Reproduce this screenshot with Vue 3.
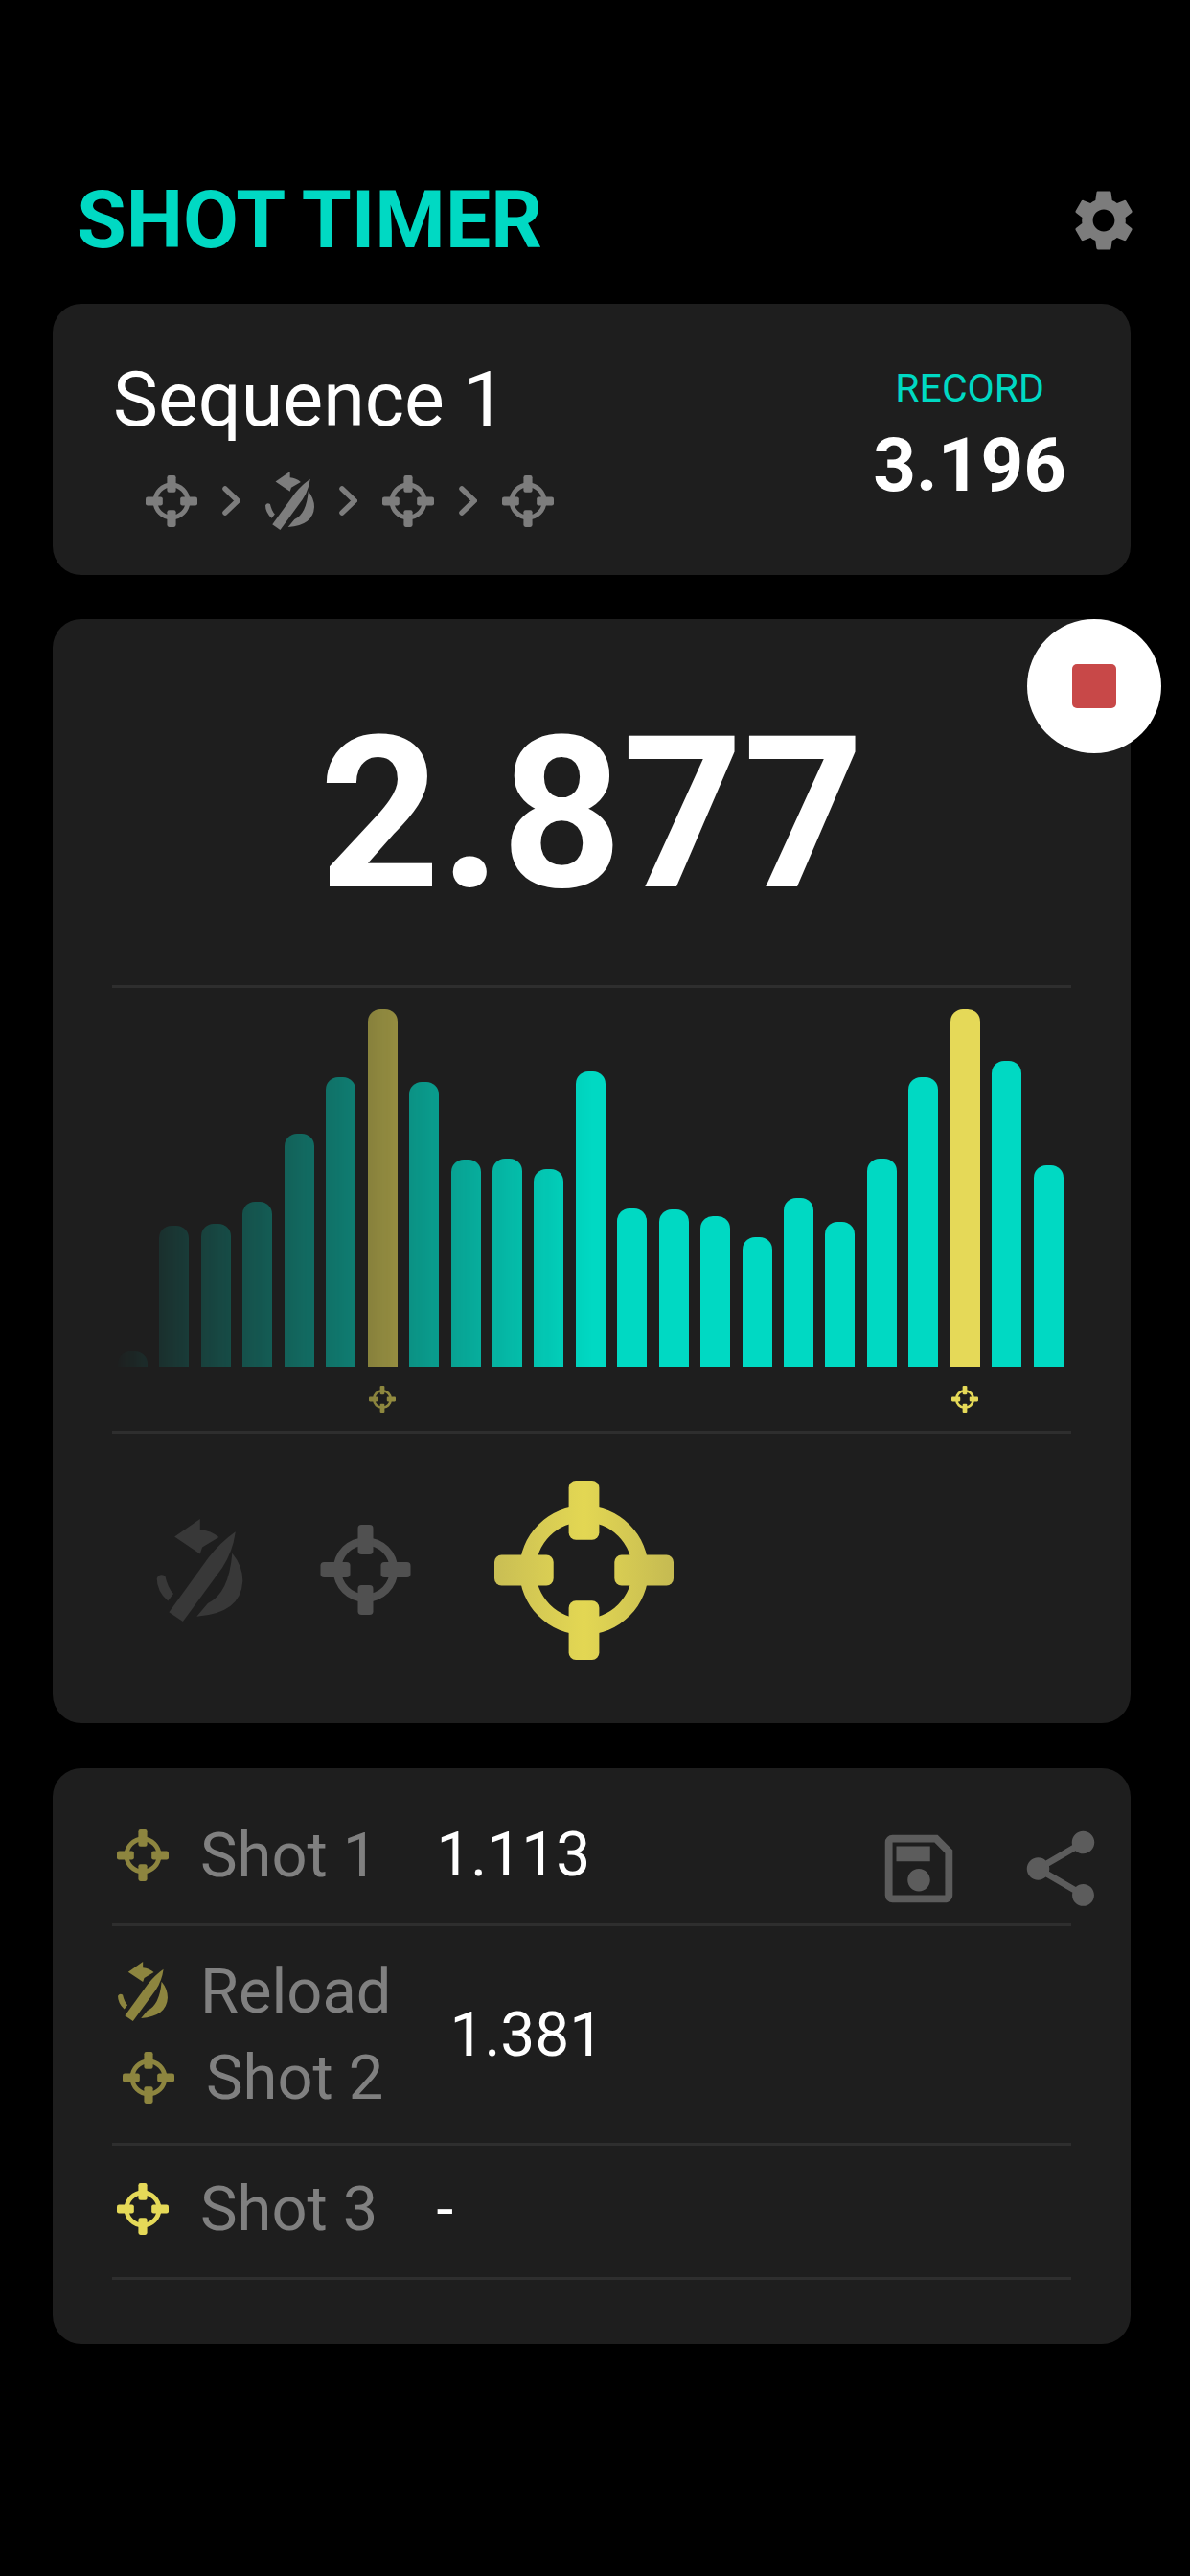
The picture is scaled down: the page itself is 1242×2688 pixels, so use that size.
<template>
  <div class="page">
    <!-- shared icon shapes -->
    <svg class="defs" aria-hidden="true">
      <defs>
        <linearGradient id="big-fill" gradientUnits="userSpaceOnUse" x1="0" y1="0" x2="100" y2="0">
          <stop offset="0" stop-color="#c9be54" />
          <stop offset="0.5" stop-color="#e3d753" />
          <stop offset="1" stop-color="#c5ba52" />
        </linearGradient>
      </defs>
      <symbol id="ic-target" viewBox="0 0 100 100">
        <path fill-rule="evenodd" d="M50 14a36 36 0 1 0 0 72a36 36 0 1 0 0-72zM50 23a27 27 0 1 1 0 54a27 27 0 1 1 0-54z" />
        <rect x="41.5" y="0" width="17" height="33" rx="4" />
        <rect x="41.5" y="67" width="17" height="33" rx="4" />
        <rect x="0" y="41.5" width="33" height="17" rx="4" />
        <rect x="67" y="41.5" width="33" height="17" rx="4" />
      </symbol>
      <symbol id="ic-reload" viewBox="0 0 155 185">
        <path d="M32 32L78 0L78 19Q98 21 112 33L82 51L78 63Z" />
        <path d="M142 23Q137 60 118 88L47 185L22 168L93 70Q115 42 142 23Z" />
        <path d="M136 62Q155 85 155 112Q152 170 72 176L92 152Q130 135 136 62Z" />
        <path d="M0 107Q5 97 15 103Q20 125 30 135L20 148Q0 130 0 107Z" />
      </symbol>
    </svg>

    <header class="header">
      <h1 class="title">SHOT TIMER</h1>
      <svg class="gear" viewBox="0 0 24 24">
        <path d="M19.14,12.94c0.04-0.3,0.06-0.61,0.06-0.94c0-0.32-0.02-0.64-0.07-0.94l2.03-1.58c0.18-0.14,0.23-0.41,0.12-0.61l-1.92-3.32c-0.12-0.22-0.37-0.29-0.59-0.22l-2.39,0.96c-0.5-0.38-1.03-0.7-1.62-0.94L14.4,2.81c-0.04-0.24-0.24-0.41-0.48-0.41h-3.84c-0.24,0-0.43,0.17-0.47,0.41L9.25,5.35C8.66,5.59,8.12,5.92,7.63,6.29L5.24,5.33c-0.22-0.08-0.47,0-0.59,0.22L2.74,8.87C2.62,9.08,2.66,9.34,2.86,9.48l2.03,1.58C4.84,11.36,4.8,11.69,4.8,12s0.02,0.64,0.07,0.94l-2.03,1.58c-0.18,0.14-0.23,0.41-0.12,0.61l1.92,3.32c0.12,0.22,0.37,0.29,0.59,0.22l2.39-0.96c0.5,0.38,1.03,0.7,1.62,0.94l0.36,2.54c0.05,0.24,0.24,0.41,0.48,0.41h3.84c0.24,0,0.44-0.17,0.47-0.41l0.36-2.54c0.59-0.24,1.13-0.56,1.62-0.94l2.39,0.96c0.22,0.08,0.47,0,0.59-0.22l1.92-3.32c0.12-0.22,0.07-0.47-0.12-0.61L19.14,12.94z M12,15.6c-1.98,0-3.6-1.62-3.6-3.6s1.62-3.6,3.6-3.6s3.6,1.62,3.6,3.6S13.98,15.6,12,15.6z" />
      </svg>
    </header>

    <section class="card seq-card">
      <div class="seq-left">
        <div class="seq-name">Sequence 1</div>
        <div class="seq-steps">
          <template v-for="(step, i) in steps" :key="i">
            <svg v-if="i > 0" class="chev" viewBox="0 0 19 31">
              <polyline points="3,3 16,15.5 3,28" />
            </svg>
            <svg :class="step === 'reload' ? 'ic-reload' : 'ic-target'"><use :href="'#ic-' + step" /></svg>
          </template>
        </div>
      </div>
      <div class="seq-right">
        <div class="record-label">RECORD</div>
        <div class="record-value">3.196</div>
      </div>
    </section>

    <section class="card timer-card">
      <button class="stop"><span class="stop-square"></span></button>
      <div class="timer">2.877</div>
      <div class="divider"></div>
      <div class="chart">
        <div class="bars">
          <div
            v-for="(bar, i) in bars"
            :key="i"
            class="bar"
            :class="{ shot: bar.shot }"
            :style="{ height: bar.h + 'px' }"
          ></div>
        </div>
        <div class="marks">
          <div v-for="(bar, i) in bars" :key="i" class="mark">
            <svg v-if="bar.shot" class="mark-ic"><use href="#ic-target" /></svg>
          </div>
        </div>
      </div>
      <div class="divider"></div>
      <div class="queue">
        <svg class="q-reload"><use href="#ic-reload" /></svg>
        <svg class="q-target"><use href="#ic-target" /></svg>
        <svg class="q-active"><use href="#ic-target" /></svg>
      </div>
    </section>

    <section class="card list-card">
      <div class="row row-first">
        <svg class="row-ic target dim"><use href="#ic-target" /></svg>
        <span class="label">Shot 1</span>
        <span class="value">1.113</span>
        <div class="actions">
          <svg class="action" viewBox="0 0 24 24">
            <path d="M17 3H5a2 2 0 0 0-2 2v14a2 2 0 0 0 2 2h14c1.1 0 2-.9 2-2V7l-4-4zm2 16H5V5h11.17L19 7.83V19zm-7-7c-1.66 0-3 1.34-3 3s1.34 3 3 3 3-1.34 3-3-1.34-3-3-3zM6 6h9v4H6z" />
          </svg>
          <svg class="action" viewBox="0 0 24 24">
            <path d="M18 16.08c-.76 0-1.44.3-1.96.77L8.91 12.7c.05-.23.09-.46.09-.7s-.04-.47-.09-.7l7.05-4.11c.54.5 1.25.81 2.04.81 1.66 0 3-1.34 3-3s-1.34-3-3-3-3 1.34-3 3c0 .24.04.47.09.7L8.04 9.81C7.5 9.31 6.79 9 6 9c-1.66 0-3 1.34-3 3s1.34 3 3 3c.79 0 1.5-.31 2.04-.81l7.12 4.16c-.05.21-.08.43-.08.65 0 1.61 1.31 2.92 2.92 2.92s2.92-1.31 2.92-2.92-1.31-2.92-2.92-2.92z" />
          </svg>
        </div>
      </div>
      <div class="row row-double">
        <div class="lines">
          <div class="line">
            <svg class="row-ic reload dim"><use href="#ic-reload" /></svg>
            <span class="label">Reload</span>
          </div>
          <div class="line indented">
            <svg class="row-ic target dim"><use href="#ic-target" /></svg>
            <span class="label">Shot 2</span>
          </div>
        </div>
        <span class="value">1.381</span>
      </div>
      <div class="row row-last">
        <svg class="row-ic target bright"><use href="#ic-target" /></svg>
        <span class="label">Shot 3</span>
        <span class="value">-</span>
      </div>
    </section>
  </div>
</template>

<script setup>
const steps = ['target', 'reload', 'target', 'target']

// bar heights in px, shots are the yellow ones
const heights = [16, 147, 149, 172, 243, 302, 373, 297, 216, 217, 206, 308, 165, 164, 157, 135, 176, 151, 217, 302, 373, 319, 210]
const bars = heights.map((h, i) => ({ h, shot: i === 6 || i === 20 }))
</script>

<style>
html,
body {
  background: #000;
}
</style>

<style scoped>
.page {
  min-height: 2688px;
  box-sizing: border-box;
  padding: 190px 62px 0 55px;
  background: #000;
  font-family: Roboto, sans-serif;
}

.defs {
  position: absolute;
  width: 0;
  height: 0;
}

/* header */
.header {
  display: flex;
  align-items: center;
  justify-content: space-between;
  height: 80px;
  margin-bottom: 47px;
  padding-left: 25px;
}

.title {
  margin: 0;
  font-size: 84px;
  font-weight: 700;
  line-height: 80px;
  color: #00d9c3;
}

.gear {
  width: 76px;
  height: 76px;
  margin-right: -10px;
  fill: #7c7c7c;
}

.card {
  position: relative;
  box-sizing: border-box;
  background: #1e1e1e;
  border-radius: 30px;
}

/* sequence card */
.seq-card {
  display: flex;
  justify-content: space-between;
  height: 283px;
  padding: 60px 67px 0 63px;
  margin-bottom: 46px;
}

.seq-name {
  font-size: 79px;
  line-height: 80px;
  color: #fff;
}

.seq-steps {
  display: flex;
  align-items: center;
  gap: 26px;
  height: 61px;
  margin-top: 35px;
  padding-left: 34px;
  color: #7d7d7d;
}

.seq-steps svg {
  fill: currentColor;
}

.ic-target {
  width: 54px;
  height: 54px;
}

.ic-reload {
  width: 51px;
  height: 61px;
}

.chev {
  width: 19px;
  height: 31px;
}

.chev polyline {
  fill: none;
  stroke: #7d7d7d;
  stroke-width: 5.5;
  stroke-linecap: round;
}

.seq-right {
  text-align: center;
}

.record-label {
  font-size: 41px;
  line-height: 50px;
  color: #00d9c3;
  margin-top: 3px;
}

.record-value {
  font-size: 78px;
  font-weight: 700;
  line-height: 90px;
  color: #fff;
  margin-top: 11px;
}

/* timer card */
.timer-card {
  height: 1152px;
  padding: 0 62px;
  margin-bottom: 47px;
}

.stop {
  position: absolute;
  top: 0;
  right: -32px;
  display: flex;
  align-items: center;
  justify-content: center;
  width: 140px;
  height: 140px;
  padding: 0;
  border: 0;
  border-radius: 50%;
  background: #fff;
}

.stop-square {
  width: 46px;
  height: 46px;
  border-radius: 5px;
  background: #c84848;
}

.timer {
  height: 382px;
  padding-top: 84px;
  box-sizing: border-box;
  font-size: 220px;
  font-weight: 700;
  line-height: 240px;
  text-align: center;
  color: #fff;
}

.divider {
  height: 3px;
  background: #2e2e2e;
}

.chart {
  -webkit-mask-image: linear-gradient(90deg, transparent, #000 50%);
  mask-image: linear-gradient(90deg, transparent, #000 50%);
}

.bars,
.marks {
  display: flex;
  gap: 12.44px;
  padding-left: 6px;
}

.bars {
  align-items: flex-end;
  height: 373px;
  padding-top: 22px;
}

.bar {
  flex: none;
  width: 31px;
  border-radius: 13px 13px 0 0;
  background: #00d9c3;
}

.bar.shot {
  background: #e5d958;
}

.marks {
  align-items: center;
  height: 67px;
}

.mark {
  display: flex;
  justify-content: center;
  flex: none;
  width: 31px;
}

.mark-ic {
  width: 28px;
  height: 28px;
  fill: #e5d958;
}

.queue {
  display: flex;
  align-items: center;
  gap: 80px;
  height: 284px;
  padding-left: 46px;
}

.q-reload {
  width: 91px;
  height: 107px;
  fill: #383838;
}

.q-target {
  width: 95px;
  height: 94px;
  fill: #505050;
}

.q-active {
  width: 191px;
  height: 187px;
  margin-left: 5px;
  fill: url(#big-fill);
}

/* shot list */
.list-card {
  height: 601px;
  padding: 0 62px;
}

.row {
  display: flex;
  align-items: center;
  gap: 61px;
  box-sizing: border-box;
  padding-left: 5px;
  border-bottom: 3px solid #2e2e2e;
}

.row-first {
  height: 165px;
  padding-top: 22px;
  padding-bottom: 3px;
}

.row-double {
  height: 229px;
}

.row-last {
  height: 140px;
  padding-bottom: 5px;
}

.row-first > .label,
.row-last > .label {
  margin-left: -28px;
}

.lines {
  display: flex;
  flex-direction: column;
}

.line {
  display: flex;
  align-items: center;
  gap: 33px;
  height: 90px;
}

.line.indented {
  padding-left: 6px;
}

.label {
  font-size: 65px;
  color: #808080;
}

.value {
  font-size: 64px;
  color: #fff;
}

.row-ic.target {
  width: 54px;
  height: 54px;
}

.row-ic.reload {
  width: 54px;
  height: 62px;
}

.row-ic.dim {
  fill: #8d853f;
}

.row-ic.bright {
  fill: #e5d958;
}

.actions {
  display: flex;
  gap: 54px;
  margin-left: auto;
  margin-right: -36px;
  margin-top: 28px;
}

.action {
  width: 94px;
  height: 94px;
  fill: #5c5c5c;
}
</style>
